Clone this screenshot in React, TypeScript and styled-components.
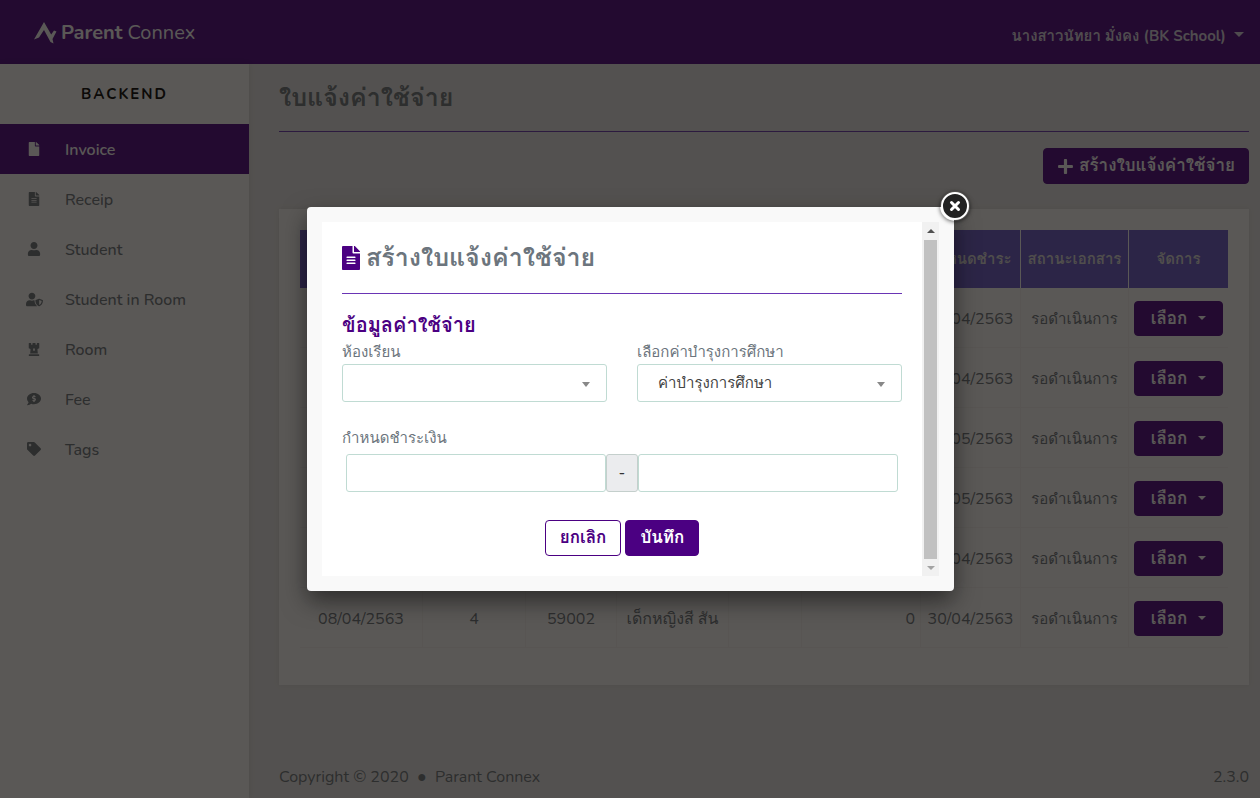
import React from "react";
import styled, { createGlobalStyle, css } from "styled-components";
import {
  FaFile,
  FaFileAlt,
  FaUser,
  FaUserShield,
  FaChessRook,
  FaCommentDollar,
  FaTag,
  FaPlus,
} from "react-icons/fa";

const indigo = "#4b0082";

const GlobalStyle = createGlobalStyle`
  *, *::before, *::after { box-sizing: border-box; }
  body {
    margin: 0;
    font-family: Nunito, Loma, "Open Sans", "Noto Sans", sans-serif;
    font-size: 16px;
    line-height: 24px;
    color: #6c757d;
    background: #e9e9ea;
  }
  button, input, select { font: inherit; }
  h1, h2, h3, p, ul { margin: 0; padding: 0; }
`;

const Page = styled.div`
  min-height: 100vh;
  display: flex;
  flex-direction: column;
`;

const TopBar = styled.header`
  display: flex;
  align-items: center;
  justify-content: space-between;
  height: 64px;
  padding: 2px 16px 0 34px;
  background: ${indigo};
  color: #fff;
`;

const Brand = styled.a`
  display: flex;
  align-items: center;
  gap: 4px;
  color: #fff;
  font-size: 20px;
  text-decoration: none;
`;

const Caret = styled.span<{ $small?: boolean }>`
  display: inline-block;
  border: ${(p) => (p.$small ? 4 : 5)}px solid transparent;
  border-top-color: currentColor;
  border-bottom: 0;
`;

const UserMenu = styled.button`
  display: flex;
  align-items: center;
  gap: 8px;
  padding: 6px 0 0;
  border: 0;
  background: none;
  color: #dcd6e4;
  font-size: 15px;
  font-weight: 700;
  ${Caret} {
    margin-bottom: 4px;
  }
`;

const Body = styled.div`
  flex: 1;
  display: flex;
`;

const Sidebar = styled.nav`
  flex: 0 0 249px;
  background: #fff;
  box-shadow: 0 0 6px rgba(0, 0, 0, 0.1);
`;

const SidebarTitle = styled.h2`
  height: 60px;
  color: #000;
  font-size: 15px;
  font-weight: 700;
  line-height: 60px;
  letter-spacing: 2px;
  text-align: center;
`;

const NavList = styled.ul`
  list-style: none;
`;

const NavLink = styled.a<{ $active?: boolean }>`
  display: flex;
  align-items: center;
  height: 50px;
  padding-top: 2px;
  color: #6c757d;
  font-size: 16px;
  font-weight: 500;
  text-decoration: none;
  ${(p) =>
    p.$active &&
    css`
      background: ${indigo};
      color: #fff;
      font-weight: 600;
    `}
`;

const NavIcon = styled.span`
  display: flex;
  justify-content: center;
  width: 68px;
  margin: 0 -3px 2px 0;
`;

const Main = styled.main`
  flex: 1;
  min-width: 0;
  display: flex;
  flex-direction: column;
  padding: 18px 11px 9px 30px;
`;

const PageTitle = styled.h1`
  font-size: 25px;
  line-height: 32px;
  font-weight: 700;
`;

const Divider = styled.hr<{ $top: number; $bottom: number }>`
  width: 100%;
  height: 1px;
  margin: ${(p) => p.$top}px 0 ${(p) => p.$bottom}px;
  border: 0;
  background: #6a35b5;
`;

const Button = styled.button<{ $outline?: boolean }>`
  display: inline-flex;
  align-items: center;
  justify-content: center;
  gap: 5px;
  height: 36px;
  padding: 0 13px;
  border: 1px solid ${indigo};
  border-radius: 4px;
  background: ${(p) => (p.$outline ? "#fff" : indigo)};
  color: ${(p) => (p.$outline ? indigo : "#fff")};
  font-size: 17px;
  font-weight: 700;
  white-space: nowrap;
`;

const Actions = styled.div`
  display: flex;
  justify-content: flex-end;
`;

const Card = styled.section`
  margin-top: 25px;
  padding: 21px 21px 37px;
  background: #fff;
  box-shadow: 0 0 6px rgba(0, 0, 0, 0.08);
`;

const Table = styled.table`
  width: 100%;
  border-collapse: separate;
  border-spacing: 0;
  table-layout: fixed;
`;

const HeadCell = styled.th`
  height: 58px;
  padding: 0;
  border-right: 1px solid #fff;
  background: #6a5acd;
  color: #ddd;
  font-size: 15px;
  font-weight: 700;
  white-space: nowrap;
  &:last-child {
    border-right: 0;
  }
`;

const Cell = styled.td<{ $right?: boolean; $small?: boolean }>`
  height: 60px;
  padding: 2px 5px 0;
  border: 0 solid #f7f6f5;
  border-width: 0 1px 1px 0;
  font-size: ${(p) => (p.$small ? 15 : 16)}px;
  text-align: ${(p) => (p.$right ? "right" : "center")};
  white-space: nowrap;
  &:last-child {
    border-right: 0;
  }
`;

const RowButton = styled(Button)`
  width: 100%;
  height: 35px;
  gap: 11px;
  ${Caret} {
    margin-bottom: 2px;
  }
`;

const Footer = styled.footer`
  display: flex;
  justify-content: space-between;
  margin-top: auto;
  font-size: 16px;
`;

const Overlay = styled.div`
  position: fixed;
  inset: 0;
  display: flex;
  align-items: center;
  justify-content: center;
  padding-left: 1px;
  background: rgba(17, 14, 12, 0.695);
`;

const Dialog = styled.div`
  position: relative;
  width: 647px;
  max-width: 100%;
  padding: 15px;
  border-radius: 4px;
  background: #f9f9f9;
  box-shadow: 0 10px 25px rgba(0, 0, 0, 0.5);
`;

const CloseButton = styled.button`
  position: absolute;
  top: -16px;
  right: -16px;
  display: flex;
  padding: 0;
  border: 0;
  border-radius: 50%;
  background: none;
  box-shadow: 0 1px 4px rgba(0, 0, 0, 0.6);
`;

const DialogFrame = styled.div`
  display: flex;
  background: #fff;
`;

const Form = styled.form`
  flex: 1;
  min-width: 0;
  padding: 20px;
`;

const DialogTitle = styled.h2`
  display: flex;
  align-items: center;
  gap: 6px;
  font-size: 25px;
  line-height: 32px;
  font-weight: 700;
  svg {
    color: ${indigo};
  }
`;

const SectionTitle = styled.h3`
  color: ${indigo};
  font-size: 20px;
  line-height: 28px;
  font-weight: 700;
`;

const Columns = styled.div`
  display: grid;
  grid-template-columns: 1fr 1fr;
  gap: 30px;
  margin-bottom: 24px;
`;

const Label = styled.label`
  display: block;
  font-size: 15px;
  line-height: 24px;
`;

const SelectBox = styled.div`
  position: relative;
  color: #888;
  ${Caret} {
    position: absolute;
    top: 18px;
    right: 17px;
    border-top-width: 5px;
    pointer-events: none;
  }
`;

const control = css`
  height: 38px;
  border: 1px solid #c0dbd3;
  border-radius: 3px;
  background: #fff;
  color: #444;
`;

const Select = styled.select`
  ${control}
  display: block;
  width: 100%;
  padding: 0 20px;
  appearance: none;
  font-size: 15px;
`;

const DateRange = styled.div`
  display: flex;
  padding: 4px;
`;

const DateInput = styled.input`
  ${control}
  flex: 1;
  min-width: 0;
  padding: 0 12px;
`;

const Addon = styled.span`
  width: 32px;
  border: 1px solid #c4cfcc;
  border-radius: 3px;
  background: #ebecee;
  color: #333;
  line-height: 36px;
  text-align: center;
`;

const FormActions = styled.div`
  display: flex;
  justify-content: center;
  gap: 4px;
  margin-top: 24px;
  ${Button} {
    padding: 0 14px;
  }
`;

const ScrollTrack = styled.div`
  flex: 0 0 17px;
  display: flex;
  flex-direction: column;
  align-items: center;
  background: #f1f1f1;
`;

const ScrollArrow = styled.span<{ $down?: boolean }>`
  display: flex;
  align-items: center;
  justify-content: center;
  height: 17px;
  color: ${(p) => (p.$down ? "#a3a3a3" : "#505050")};
  ${Caret} {
    transform: ${(p) => (p.$down ? "none" : "rotate(180deg)")};
  }
`;

const ScrollThumb = styled.div`
  flex: 1;
  width: 13px;
  margin-top: 1px;
  background: #c1c1c1;
`;

const navItems = [
  { label: "Invoice", Icon: FaFile, size: 14 },
  { label: "Receip", Icon: FaFileAlt, size: 14 },
  { label: "Student", Icon: FaUser, size: 14 },
  { label: "Student in Room", Icon: FaUserShield, size: 17 },
  { label: "Room", Icon: FaChessRook, size: 14 },
  { label: "Fee", Icon: FaCommentDollar, size: 14 },
  { label: "Tags", Icon: FaTag, size: 14 },
];

const columnWidths = [123, 103, 91, 112, 73, 119, 100, 108, 99];
const headings = ["", "", "", "", "", "", "กำหนดชำระ", "สถานะเอกสาร", "จัดการ"];
const pending = "รอดำเนินการ";
const rows = [
  ["", "", "", "", "", "", "30/04/2563", pending],
  ["", "", "", "", "", "", "30/04/2563", pending],
  ["", "", "", "", "", "", "30/05/2563", pending],
  ["", "", "", "", "", "", "30/05/2563", pending],
  ["", "", "", "", "", "", "30/04/2563", pending],
  ["08/04/2563", "4", "59002", "เด็กหญิงสี สัน", "", "0", "30/04/2563", pending],
];

export default function App() {
  return (
    <>
      <GlobalStyle />
      <Page>
        <TopBar>
          <Brand href="#">
            <svg width="23" height="22" viewBox="0 0 23 22" fill="#fff" aria-hidden="true">
              <path d="M0 17.500 L10 0 L17.200 12.500 L20 8.500 L22.500 9.500 L18.500 17 L19.500 21.500 L16.500 20 L10 8 L5 15.500 Z" />
            </svg>
            <span>
              <b>Parent</b> Connex
            </span>
          </Brand>
          <UserMenu type="button">
            นางสาวนัทยา มั่งคง (BK School)
            <Caret />
          </UserMenu>
        </TopBar>
        <Body>
          <Sidebar>
            <SidebarTitle>BACKEND</SidebarTitle>
            <NavList>
              {navItems.map(({ label, Icon, size }, i) => (
                <li key={label}>
                  <NavLink href="#" $active={i === 0}>
                    <NavIcon>
                      <Icon size={size} />
                    </NavIcon>
                    {label}
                  </NavLink>
                </li>
              ))}
            </NavList>
          </Sidebar>
          <Main>
            <PageTitle>ใบแจ้งค่าใช้จ่าย</PageTitle>
            <Divider $top={17} $bottom={16} />
            <Actions>
              <Button type="button">
                <FaPlus />
                สร้างใบแจ้งค่าใช้จ่าย
              </Button>
            </Actions>
            <Card>
              <Table>
                <colgroup>
                  {columnWidths.map((w, i) => (
                    <col key={i} width={w} />
                  ))}
                </colgroup>
                <thead>
                  <tr>
                    {headings.map((h, i) => (
                      <HeadCell key={i} scope="col">
                        {h}
                      </HeadCell>
                    ))}
                  </tr>
                </thead>
                <tbody>
                  {rows.map((row, r) => (
                    <tr key={r}>
                      {row.map((value, c) => (
                        <Cell key={c} $right={c === 5} $small={c === 7}>
                          {value}
                        </Cell>
                      ))}
                      <Cell>
                        <RowButton type="button">
                          เลือก
                          <Caret $small />
                        </RowButton>
                      </Cell>
                    </tr>
                  ))}
                </tbody>
              </Table>
            </Card>
            <Footer>
              <span>Copyright © 2020 &nbsp;●&nbsp; Parant Connex</span>
              <span>2.3.0</span>
            </Footer>
          </Main>
        </Body>
      </Page>

      <Overlay>
        <Dialog role="dialog" aria-modal="true" aria-labelledby="dialog-title">
          <DialogFrame>
            <Form>
              <DialogTitle id="dialog-title">
                <svg width="18" height="24" viewBox="0 0 384 512" fill="currentColor" aria-hidden="true">
                  <path d="M224 136V0H24C10.700 0 0 10.700 0 24v464c0 13.300 10.700 24 24 24h336c13.300 0 24-10.700 24-24V160H248c-13.200 0-24-10.800-24-24zm64 236c0 6.600-5.400 12-12 12H108c-6.600 0-12-5.400-12-12v-8c0-6.600 5.400-12 12-12h168c6.600 0 12 5.400 12 12v8zm0-64c0 6.600-5.400 12-12 12H108c-6.600 0-12-5.400-12-12v-8c0-6.600 5.400-12 12-12h168c6.600 0 12 5.400 12 12v8zm0-72v8c0 6.600-5.400 12-12 12H108c-6.600 0-12-5.400-12-12v-8c0-6.600 5.400-12 12-12h168c6.600 0 12 5.400 12 12zm96-114.100v6.100H256V0h6.100c6.400 0 12.500 2.500 17 7l97.900 98c4.500 4.500 7 10.600 7 16.900z" />
                </svg>
                สร้างใบแจ้งค่าใช้จ่าย
              </DialogTitle>
              <Divider $top={19} $bottom={18} />
              <SectionTitle>ข้อมูลค่าใช้จ่าย</SectionTitle>
              <Columns>
                <div>
                  <Label htmlFor="room">ห้องเรียน</Label>
                  <SelectBox>
                    <Select id="room" defaultValue="">
                      <option value="" />
                    </Select>
                    <Caret $small />
                  </SelectBox>
                </div>
                <div>
                  <Label htmlFor="fee">เลือกค่าบำรุงการศึกษา</Label>
                  <SelectBox>
                    <Select id="fee">
                      <option>ค่าบำรุงการศึกษา</option>
                    </Select>
                    <Caret $small />
                  </SelectBox>
                </div>
              </Columns>
              <Label htmlFor="due-from">กำหนดชำระเงิน</Label>
              <DateRange>
                <DateInput id="due-from" type="text" />
                <Addon>-</Addon>
                <DateInput type="text" aria-label="กำหนดชำระเงิน" />
              </DateRange>
              <FormActions>
                <Button type="button" $outline>
                  ยกเลิก
                </Button>
                <Button type="button">บันทึก</Button>
              </FormActions>
            </Form>
            <ScrollTrack aria-hidden="true">
              <ScrollArrow>
                <Caret $small />
              </ScrollArrow>
              <ScrollThumb />
              <ScrollArrow $down>
                <Caret $small />
              </ScrollArrow>
            </ScrollTrack>
          </DialogFrame>
          <CloseButton type="button" aria-label="Close">
            <svg width="30" height="30" viewBox="0 0 30 30">
              <circle cx="15" cy="15" r="13" fill="#222" stroke="#fff" strokeWidth="2" />
              <path d="M11.500 11.500 L18.500 18.500 M18.500 11.500 L11.500 18.500" stroke="#fff" strokeWidth="3" strokeLinecap="round" />
            </svg>
          </CloseButton>
        </Dialog>
      </Overlay>
    </>
  );
}
